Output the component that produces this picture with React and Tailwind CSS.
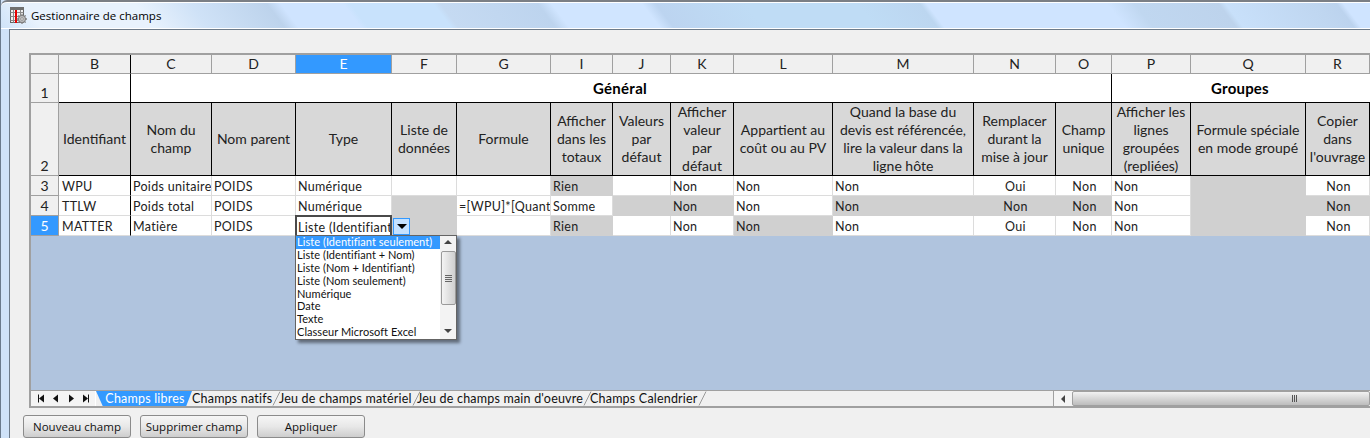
const cols = [
  { l: 'B', w: 72 }, { l: 'C', w: 81 }, { l: 'D', w: 84 }, { l: 'E', w: 96 }, { l: 'F', w: 65 },
  { l: 'G', w: 94 }, { l: 'I', w: 62 }, { l: 'J', w: 58 }, { l: 'K', w: 63 }, { l: 'L', w: 99 },
  { l: 'M', w: 141 }, { l: 'N', w: 82 }, { l: 'O', w: 56 }, { l: 'P', w: 79 }, { l: 'Q', w: 115 }, { l: 'R', w: 64 },
];

const headers = [
  'Identifiant', 'Nom du champ', 'Nom parent', 'Type', 'Liste de données', 'Formule',
  'Afficher dans les totaux', 'Valeurs par défaut', 'Afficher valeur par défaut',
  'Appartient au coût ou au PV', 'Quand la base du devis est référencée, lire la valeur dans la ligne hôte',
  'Remplacer durant la mise à jour', 'Champ unique', 'Afficher les lignes groupées (repliées)',
  'Formule spéciale en mode groupé', "Copier dans l'ouvrage",
];

// g = grisé, c = centré
const rows = [
  { n: 3, cells: [['WPU'], ['Poids unitaire'], ['POIDS'], ['Numérique'], [''], [''], ['Rien', 'g'], [''], ['Non'], ['Non'], ['Non'], ['Oui', 'c'], ['Non', 'c'], ['Non'], ['', 'g'], ['Non', 'c']] },
  { n: 4, cells: [['TTLW'], ['Poids total'], ['POIDS'], ['Numérique'], ['', 'g'], ['=[WPU]*[Quantité]'], ['Somme'], ['', 'g'], ['Non', 'g'], ['Non'], ['Non', 'g'], ['Non', 'gc'], ['Non', 'gc'], ['Non'], ['', 'g'], ['Non', 'gc']] },
  { n: 5, cells: [['MATTER'], ['Matière'], ['POIDS'], ['EDIT'], ['', 'g'], [''], ['Rien', 'g'], [''], ['Non'], ['Non', 'g'], ['Non'], ['Oui', 'c'], ['Non', 'c'], ['Non'], ['', 'g'], ['Non', 'c']] },
];

const options = [
  'Liste (Identifiant seulement)', 'Liste (Identifiant + Nom)', 'Liste (Nom + Identifiant)', 'Liste (Nom seulement)',
  'Numérique', 'Date', 'Texte', 'Classeur Microsoft Excel',
];

const tabs = [
  { t: 'Champs natifs', w: 87 }, { t: 'Jeu de champs matériel', w: 138 },
  { t: "Jeu de champs main d'oeuvre", w: 173 }, { t: 'Champs Calendrier', w: 111 },
];

const TableIcon = () => (
  <svg width="17" height="17" viewBox="0 0 17 17" className="shrink-0">
    <rect x="0.5" y="0.5" width="13" height="15" fill="#f0f0f0" stroke="#666" />
    <path d="M0.5 5.5h13M0.5 9.5h13M0.5 13.5h13M3.5 0.5v15M10.5 0.5v15" stroke="#8a8a8a" fill="none" />
    <rect x="0" y="0" width="14" height="3" fill="#707070" />
    <rect x="5" y="3" width="2" height="13" fill="#e80000" />
    <circle cx="12" cy="12" r="3.6" fill="#bdbdbd" stroke="#808080" />
    <circle cx="12" cy="12" r="1.3" fill="#f4f4f4" stroke="#777" strokeWidth="0.7" />
    <path d="M12 6.8v2M12 15.2v1.8M6.8 12h2M15.2 12h1.8M8.4 8.4l1.3 1.3M14.3 14.3l1.3 1.3M15.6 8.4l-1.3 1.3M9.7 14.3l-1.3 1.3" stroke="#808080" strokeWidth="1.3" />
  </svg>
);

const NavIcon = ({ d, bar }) => (
  <svg width="8" height="9" viewBox="0 0 8 9">
    <path d={d} fill="#111" />
    {bar && <rect x={bar} y="0.5" width="1" height="8" fill="#111" />}
  </svg>
);

const TabSlash = () => (
  <svg width="9" height="15" viewBox="0 0 9 15" className="shrink-0">
    <path d="M8 0.5 L1 14.5" stroke="#9a9a9a" fill="none" />
  </svg>
);

const Dropdown = () => (
  <div className="absolute left-[-2px] top-[18px] z-20 flex h-[105px] w-[162px] border border-[#646464] bg-white shadow-[3px_3px_3px_rgba(0,0,0,0.45)]">
    <div className="flex w-[144px] flex-col">
      {options.map((o, i) => (
        <div
          key={o}
          className={`h-[13px] whitespace-nowrap pl-[1px] text-[11px] leading-[12px] tracking-[0.05px] ${i === 0 ? 'bg-[#3399ff] text-white' : 'text-[#111]'}`}
        >
          {o}
        </div>
      ))}
    </div>
    <div className="flex w-[16px] flex-col items-center bg-[#f3f3f3]">
      <div className="mt-[4px] h-0 w-0 border-x-[4px] border-b-[4px] border-x-transparent border-b-[#444]" />
      <div className="mt-[7px] flex h-[54px] w-[15px] flex-col items-center justify-center gap-[1px] rounded-[2px] border border-[#9a9a9a] bg-gradient-to-r from-[#f4f4f4] to-[#cfcfcf]">
        <div className="h-px w-[7px] bg-[#666]" />
        <div className="h-px w-[7px] bg-[#666]" />
        <div className="h-px w-[7px] bg-[#666]" />
        <div className="h-px w-[7px] bg-[#666]" />
      </div>
      <div className="mt-[24px] h-0 w-0 border-x-[4px] border-t-[4px] border-x-transparent border-t-[#444]" />
    </div>
  </div>
);

const Button = ({ label }) => (
  <button className="h-[23px] w-[108px] rounded-[3px] border border-[#8b8b8b] bg-gradient-to-b from-[#f6f6f6] via-[#e8e8e8] to-[#cdcdcd] text-[11.5px] leading-none text-[#111]">
    {label}
  </button>
);

const BodyCell = ({ cell, first }) => {
  const [text, flag = ''] = cell;
  const gray = flag.includes('g');
  const center = flag.includes('c');
  if (text === 'EDIT') {
    return (
      <div className="relative z-10 -my-px -ml-px flex items-center whitespace-nowrap border-2 border-[#4a4a4a] bg-white pl-[1px] pt-[3px] text-[12.5px] tracking-[0.3px]">
        <span className="block w-[92px] overflow-hidden">Liste (Identifiant seulement)</span>
        <div className="absolute left-[96px] top-[1px] flex h-[17px] w-[17px] items-center justify-center border border-[#3399ff] bg-[#c4e1ff]">
          <div className="h-0 w-0 border-x-[5px] border-t-[5px] border-x-transparent border-t-black" />
        </div>
        <Dropdown />
      </div>
    );
  }
  return (
    <div
      className={`flex items-center overflow-hidden whitespace-nowrap border-b border-r pt-[3px] text-[12.5px] tracking-[0.3px] ${first ? 'pl-[3px]' : 'pl-[2px]'} ${gray ? 'border-[#d0d0d0] bg-[#d0d0d0]' : 'border-[#dcdcdc] bg-white'} ${first ? 'border-r-black' : ''} ${center ? 'justify-center' : ''}`}
    >
      {text}
    </div>
  );
};

export default function App() {
  const gridCols = 'grid-cols-[28px_72px_81px_84px_96px_65px_94px_62px_58px_63px_99px_141px_82px_56px_79px_115px_64px]';

  return (
    <div className="flex h-[438px] w-[1370px] flex-col overflow-hidden border-l border-[#6a7a8c] bg-[#cfe2f8] font-['Lato',sans-serif] text-[#222]">
      {/* barre de titre */}
      <div className="flex h-[29px] shrink-0 items-center gap-[4px] rounded-tl-[6px] border-t-2 border-[#7b7f85] bg-[linear-gradient(53deg,#cfe3f8_0%,#e8f2fd_3%,#e8f2fd_11%,#cfe2f7_15%,#bdd3ec_20.5%,#cfe4ff_21.5%,#cfe4ff_26%,#c8e2fc_26.5%,#c8e2fc_32.5%,#c5daf2_33%,#bdd4ee_40%,#d0e5ff_41%,#d0e5ff_47.5%,#bcd4f0_48.5%,#bfdcf5_55%,#bfdcf5_63%,#bcd6f0_67.5%,#cfe4ff_68%,#cfe4ff_81%,#c0d7f0_83%,#bdd3ec_89%,#c8e0fa_89.5%,#bfd6f0_96%,#bcd3ee_97.5%,#cfe4ff_98%)] pl-[9px] shadow-[inset_0_1px_0_#fff,inset_0_-1px_0_#fff]">
        <TableIcon />
        <span className="font-['Open_Sans',sans-serif] text-[11.5px] text-black">Gestionnaire de champs</span>
      </div>

      <div className="flex min-h-0 flex-1 pl-[8px]">
        <div className="flex min-w-0 flex-1 flex-col border-t border-l border-[#6d7b8a] bg-[#f0f0f0] pl-[19px] pt-[23px]">
          {/* feuille */}
          <div className="flex h-[355px] shrink-0 flex-col border-t-2 border-b-2 border-l-2 border-[#a0a0a0] text-[14px] leading-[18px]">
            <div className={`grid shrink-0 grid-rows-[19px_29px_73px_20px_20px_20px] ${gridCols}`}>
              {/* ligne des lettres */}
              <div className="border-b border-r border-[#a0a0a0] bg-[#f0f0f0]" />
              {cols.map((c) => (
                <div
                  key={c.l}
                  className={`flex items-center justify-center border-b border-r border-[#a0a0a0] ${c.l === 'E' ? 'bg-[#3399ff] text-white' : 'bg-[#f0f0f0]'} ${c.l === 'B' ? 'border-r-black' : ''}`}
                >
                  {c.l}
                </div>
              ))}

              {/* ligne 1 */}
              <div className="flex items-end justify-center border-b border-r border-[#a0a0a0] bg-[#f0f0f0]">1</div>
              <div className="border-b border-r border-black bg-white" />
              <div className="col-span-12 flex items-center justify-center border-b border-r border-black bg-white pr-[2px] text-[15px] font-bold tracking-[0.3px] text-black">Général</div>
              <div className="col-span-3 flex items-center justify-center border-b border-black bg-white pr-[2px] text-[15px] font-bold tracking-[0.2px] text-black">Groupes</div>

              {/* ligne 2 */}
              <div className="flex items-end justify-center border-b border-r border-[#a0a0a0] bg-[#f0f0f0]">2</div>
              {headers.map((h) => (
                <div key={h} className="flex items-center justify-center border-b border-r border-black bg-[#d8d8d8] px-[1px] text-center">
                  {h}
                </div>
              ))}

              {/* données */}
              {rows.map((r) => [
                <div
                  key={`h${r.n}`}
                  className={`flex items-center justify-center border-b border-r border-[#a0a0a0] ${r.n === 5 ? 'bg-[#3399ff] text-white' : 'bg-[#f0f0f0]'}`}
                >
                  {r.n}
                </div>,
                ...r.cells.map((c, i) => <BodyCell key={`${r.n}-${i}`} cell={c} first={i === 0} />),
              ])}
            </div>

            <div className="min-h-0 flex-1 bg-[#b0c4de]" />

            {/* onglets + défilement */}
            <div className="flex h-[16px] shrink-0 items-stretch border-t border-[#a0a0a0] bg-[#f0f0f0] text-[12.5px] leading-[15px] tracking-[0.2px]">
              <div className="flex w-[65px] items-center justify-around border-r border-[#fff] bg-[#f4f4f4] px-[2px]">
                <NavIcon d="M7 0.5v8L2 4.5z" bar="1" />
                <NavIcon d="M6 0.5v8L1 4.5z" />
                <NavIcon d="M2 0.5v8L7 4.5z" />
                <NavIcon d="M1 0.5v8L6 4.5z" bar="6" />
              </div>
              <div className="flex w-[96px] items-center justify-center bg-[#3399ff] pl-[2px] text-white [clip-path:polygon(0_0,100%_0,94%_100%,7%_100%)]">Champs libres</div>
              {tabs.map((t) => (
                <div key={t.t} className="flex items-center justify-between" style={{ width: t.w }}>
                  <span className="whitespace-nowrap text-[#111]">{t.t}</span>
                  <TabSlash />
                </div>
              ))}
              <div className="flex-1" />
              <div className="flex w-[317px] items-stretch border-l border-[#a0a0a0] bg-[#f4f4f4]">
                <div className="flex w-[18px] items-center justify-center">
                  <div className="h-0 w-0 border-y-[4px] border-r-[4px] border-y-transparent border-r-[#444]" />
                </div>
                <div className="flex flex-1 items-center justify-center rounded-[2px] border border-[#a0a0a0] bg-gradient-to-b from-[#f2f2f2] to-[#bdbdbd] pl-[146px]">
                  <div className="flex gap-[1px]">
                    <div className="h-[7px] w-px bg-[#555]" />
                    <div className="h-[7px] w-px bg-[#555]" />
                    <div className="h-[7px] w-px bg-[#555]" />
                  </div>
                </div>
              </div>
            </div>
          </div>

          {/* boutons */}
          <div className="ml-[-6px] mt-[7px] flex gap-[9px] font-['Open_Sans',sans-serif]">
            <Button label="Nouveau champ" />
            <Button label="Supprimer champ" />
            <Button label="Appliquer" />
          </div>
        </div>
      </div>
    </div>
  );
}
